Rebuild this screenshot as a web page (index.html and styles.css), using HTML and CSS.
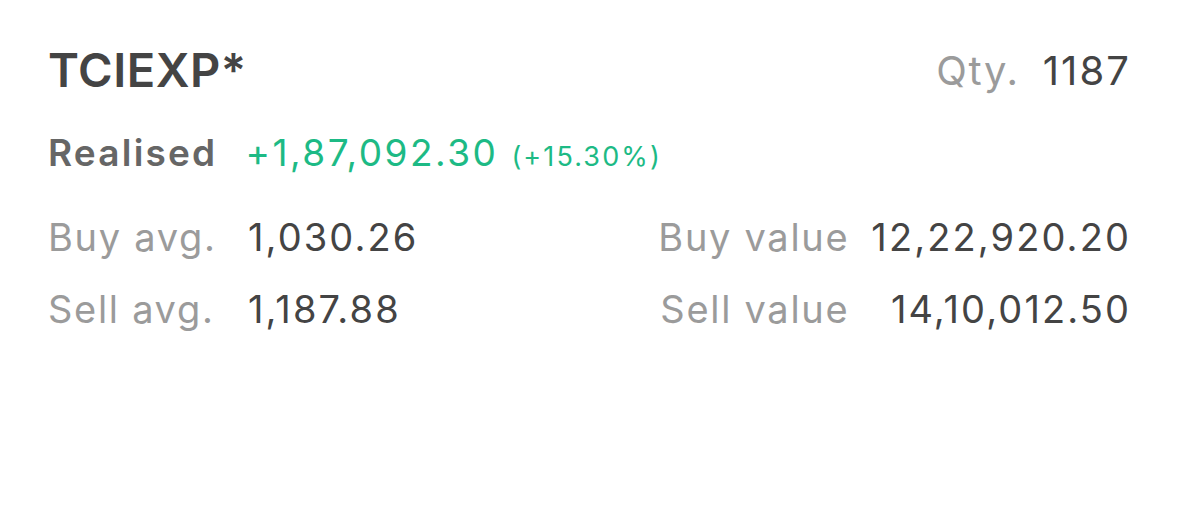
FILE: index.html
```html
<!DOCTYPE html>
<html>
<head>
<meta charset="utf-8">
<link rel="stylesheet" href="styles.css">
</head>
<body>
<div class="card">
  <div class="head">
    <div class="symbol">TCIEXP*</div>
    <div class="qty"><span class="label">Qty.</span><span class="num">1187</span></div>
  </div>
  <div class="pnl">
    <span class="pnl-label">Realised</span>
    <span class="pnl-val">+1,87,092.30</span>
    <span class="pnl-pct">(+15.30%)</span>
  </div>
  <div class="stats">
    <span class="label">Buy avg.</span>
    <span class="num">1,030.26</span>
    <span class="label right">Buy value</span>
    <span class="num right">12,22,920.20</span>
    <span class="label">Sell avg.</span>
    <span class="num">1,187.88</span>
    <span class="label right">Sell value</span>
    <span class="num right">14,10,012.50</span>
  </div>
</div>
</body>
</html>
```
FILE: styles.css
```css
html, body {
  margin: 0;
  background: #fff;
}
body {
  font-family: Inter, "Noto Sans", sans-serif;
  color: #444;
}
.card {
  padding: 40px 48px 0 48px;
}
.head {
  display: flex;
  justify-content: space-between;
  align-items: baseline;
}
.symbol {
  font-size: 47px;
  font-weight: 600;
  color: #444;
  line-height: 60px;
  letter-spacing: 0.5px;
}
.qty {
  font-size: 40px;
  display: flex;
  gap: 23px;
  align-items: baseline;
  position: relative;
  top: -2px;
}
.label {
  color: #9b9b9b;
  letter-spacing: 1.7px;
}
.num {
  color: #444;
  letter-spacing: 2.1px;
}
.pnl {
  display: flex;
  align-items: baseline;
  margin-top: 30px;
  line-height: 46px;
}
.pnl-label {
  font-size: 37px;
  font-weight: 600;
  color: #666;
  letter-spacing: 2.2px;
  margin-right: 28px;
}
.pnl-val {
  font-size: 37px;
  color: #1dba85;
  letter-spacing: 2.5px;
  margin-right: 13px;
}
.pnl-pct {
  font-size: 27px;
  color: #1dba85;
  letter-spacing: 2.1px;
}
.stats {
  margin-top: 34px;
  display: grid;
  grid-template-columns: 176px 1fr auto auto;
  column-gap: 24px;
  row-gap: 26px;
  font-size: 38px;
  line-height: 46px;
  align-items: baseline;
}
.stats .label.right {
  margin-right: -2px;
}
.right {
  text-align: right;
}
```
